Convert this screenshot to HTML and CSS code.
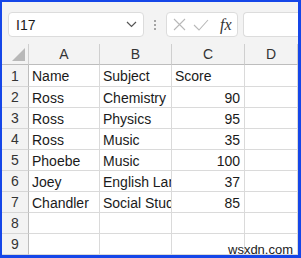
FILE: index.html
```html
<!DOCTYPE html>
<html>
<head>
<meta charset="utf-8">
<link rel="stylesheet" href="styles.css">
</head>
<body>
<div class="frame">
  <div class="toolbar">
    <div class="namebox">
      <span class="ref">I17</span>
      <svg class="chev" width="11" height="7" viewBox="0 0 11 7"><path d="M1 1 L5.5 5.5 L10 1" fill="none" stroke="#555" stroke-width="1.2"/></svg>
    </div>
    <div class="dots"><span></span><span></span><span></span></div>
    <div class="fxbox">
      <svg class="ico" width="13" height="13" viewBox="0 0 13 13"><path d="M1 1 L12 12 M12 1 L1 12" stroke="#b8b8b8" stroke-width="1.1" fill="none"/></svg>
      <svg class="ico" width="16" height="12" viewBox="0 0 16 12"><path d="M1 6 L6 11 L15 1" stroke="#b8b8b8" stroke-width="1.1" fill="none"/></svg>
      <span class="fx">fx</span>
    </div>
    <div class="formula"></div>
  </div>
  <div class="sheet">
    <div class="corner"><span class="tri"></span></div>
    <div class="ch">A</div><div class="ch">B</div><div class="ch">C</div><div class="ch">D</div>

    <div class="rh">1</div><div class="c">Name</div><div class="c">Subject</div><div class="c">Score</div><div class="c"></div>
    <div class="rh">2</div><div class="c">Ross</div><div class="c">Chemistry</div><div class="c n">90</div><div class="c"></div>
    <div class="rh">3</div><div class="c">Ross</div><div class="c">Physics</div><div class="c n">95</div><div class="c"></div>
    <div class="rh">4</div><div class="c">Ross</div><div class="c">Music</div><div class="c n">35</div><div class="c"></div>
    <div class="rh">5</div><div class="c">Phoebe</div><div class="c">Music</div><div class="c n">100</div><div class="c"></div>
    <div class="rh">6</div><div class="c">Joey</div><div class="c">English Language</div><div class="c n">37</div><div class="c"></div>
    <div class="rh">7</div><div class="c">Chandler</div><div class="c">Social Studies</div><div class="c n">85</div><div class="c"></div>
    <div class="rh">8</div><div class="c"></div><div class="c"></div><div class="c"></div><div class="c"></div>
    <div class="rh">9</div><div class="c"></div><div class="c"></div><div class="c"></div><div class="c"></div>
  </div>
  <div class="wm">wsxdn.com</div>
</div>
</body>
</html>
```
FILE: styles.css
```css
html, body { margin: 0; padding: 0; background: #fff; }
.frame {
  position: relative;
  width: 301px; height: 258px;
  box-sizing: border-box;
  border: 2px solid #1546e8;
  border-right-width: 3px;
  border-bottom-width: 3px;
  overflow: hidden;
  font-family: "Liberation Sans", Arial, sans-serif;
  color: #1a1a1a;
}
.toolbar {
  height: 42px;
  box-sizing: border-box;
  background: #f3f3f3;
  display: flex;
  align-items: flex-start;
  padding: 10px 0 0 6px;
}
.namebox {
  width: 136px; height: 25px;
  box-sizing: border-box;
  background: #fff;
  border: 1px solid #dcdcdc;
  border-radius: 4px;
  display: flex; align-items: center; justify-content: space-between;
  padding: 0 6px 0 7px;
  font-size: 14px;
}
.chev { display: block; }
.dots {
  width: 22px; height: 25px;
  display: flex; flex-direction: column; align-items: center; justify-content: center; gap: 2px;
}
.dots span { width: 2px; height: 2px; background: #8a8a8a; border-radius: 1px; }
.fxbox {
  width: 72px; height: 25px;
  box-sizing: border-box;
  background: #fff;
  border: 1px solid #dcdcdc;
  border-radius: 4px;
  display: flex; align-items: center;
  padding: 0 4px 0 6px;
  gap: 7px;
}
.ico { display: block; }
.fx {
  font-family: "Liberation Serif", "Times New Roman", serif;
  font-style: italic;
  font-size: 16px;
  color: #333;
  margin-left: 4px;
}
.formula {
  flex: 1;
  height: 25px;
  margin-left: 5px;
  box-sizing: border-box;
  background: #fff;
  border: 1px solid #dcdcdc;
  border-right: none;
  border-radius: 4px 0 0 4px;
}
.sheet {
  display: grid;
  grid-template-columns: 27px 71px 72px 73px 1fr;
  grid-template-rows: 21px 22px repeat(8, 21px);
  font-size: 14px;
}
.corner, .ch, .rh {
  background: #f3f3f3;
  box-sizing: border-box;
  border-right: 1px solid #cfcfcf;
  border-bottom: 1px solid #bdbdbd;
  color: #333;
}
.corner { position: relative; }
.tri {
  position: absolute; right: 3px; bottom: 3px;
  width: 0; height: 0;
  border-left: 13px solid transparent;
  border-bottom: 13px solid #b8b8b8;
}
.ch {
  display: flex; align-items: center; justify-content: center;
}
.rh {
  display: flex; align-items: center; justify-content: center;
  border-bottom-color: #d6d6d6;
  border-right-color: #bdbdbd;
}
.c {
  box-sizing: border-box;
  border-right: 1px solid #dadada;
  border-bottom: 1px solid #dadada;
  padding: 1px 3px 0;
  display: flex; align-items: center;
  white-space: nowrap;
  overflow: hidden;
  background: #fff;
}
.c.n { justify-content: flex-end; padding-right: 4px; }
.wm {
  position: absolute;
  left: 226px; top: 240px;
  font-size: 13px;
  color: #222;
  background: transparent;
}
```
